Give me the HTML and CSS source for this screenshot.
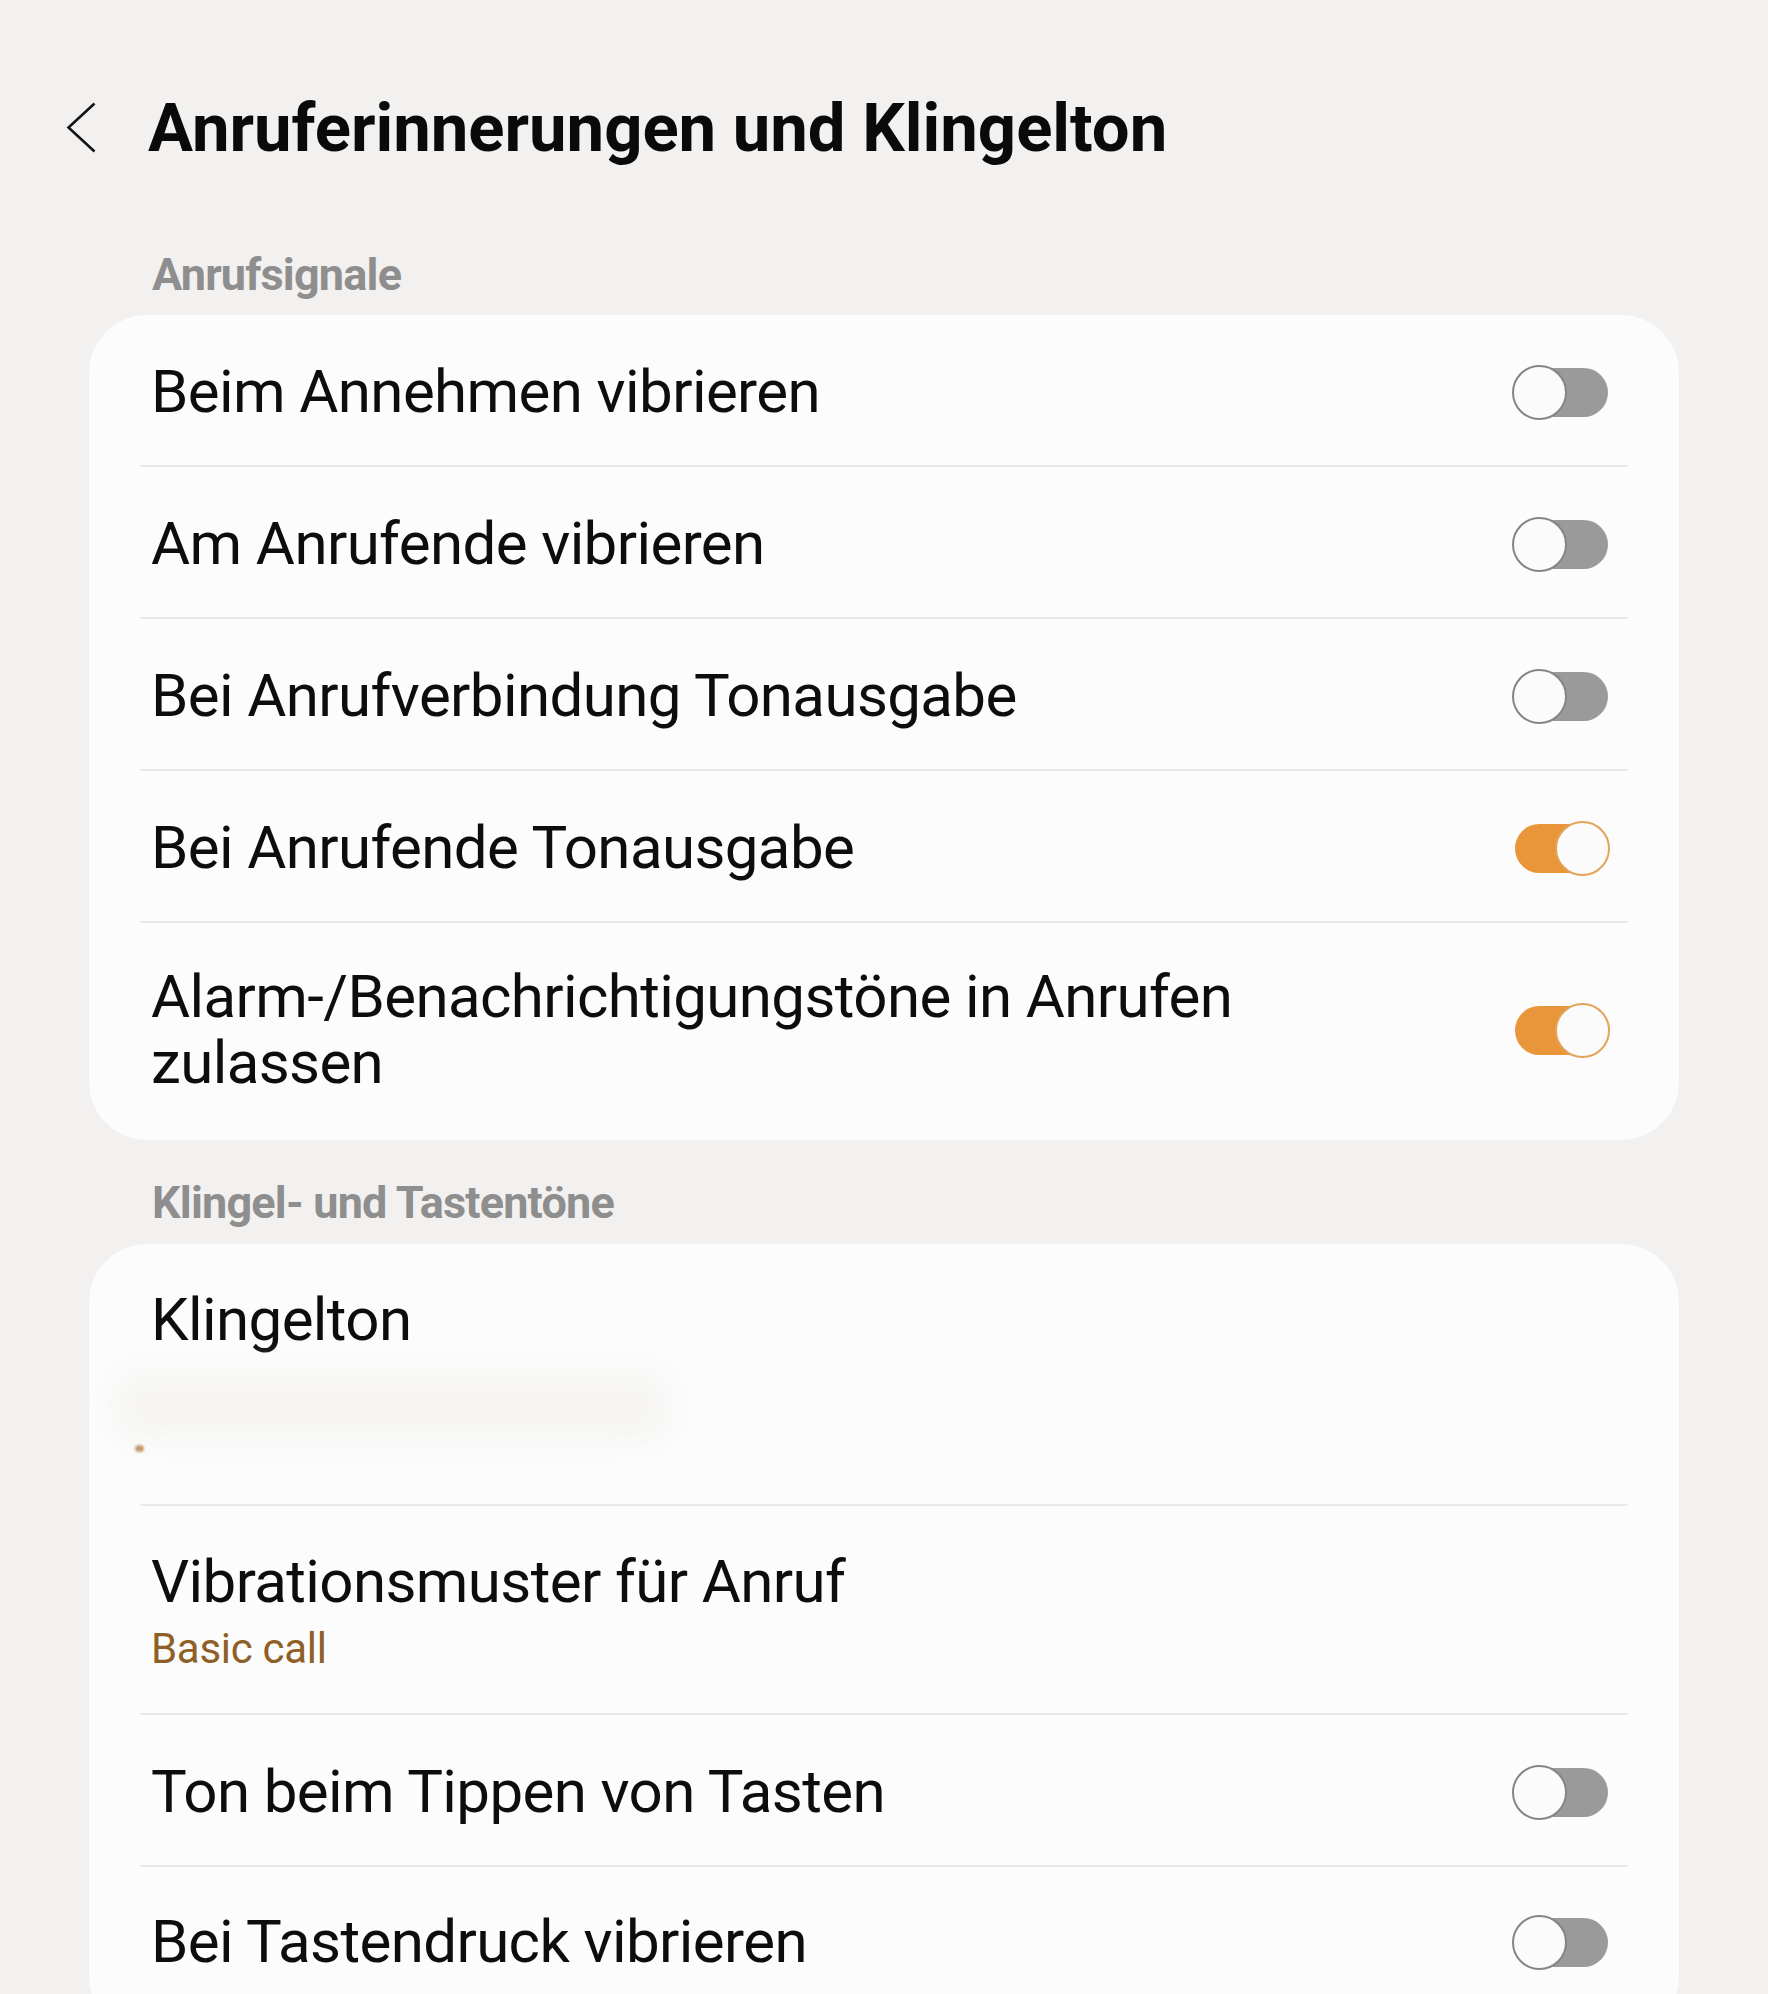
FILE: index.html
```html
<!DOCTYPE html>
<html lang="de">
<head>
<meta charset="utf-8">
<title>Anruferinnerungen und Klingelton</title>
<link rel="stylesheet" href="styles.css">
</head>
<body>
<div class="screen">
  <header class="header">
    <svg class="back" viewBox="0 0 31 52" width="31" height="52" aria-hidden="true">
      <polyline points="28.5,1.5 2.5,25.5 28.5,49.5" fill="none" stroke="#141414" stroke-width="2.6" stroke-linejoin="miter" stroke-linecap="butt"/>
    </svg>
    <h1 class="title">Anruferinnerungen und Klingelton</h1>
  </header>

  <div class="section-title first">Anrufsignale</div>
  <div class="card card-top">
    <div class="row">
      <div class="label">Beim Annehmen vibrieren</div>
      <span class="toggle"></span>
    </div>
    <div class="row">
      <div class="label">Am Anrufende vibrieren</div>
      <span class="toggle"></span>
    </div>
    <div class="row">
      <div class="label">Bei Anrufverbindung Tonausgabe</div>
      <span class="toggle"></span>
    </div>
    <div class="row">
      <div class="label">Bei Anrufende Tonausgabe</div>
      <span class="toggle on"></span>
    </div>
    <div class="row last">
      <div class="label">Alarm-/Benachrichtigungstöne in Anrufen<br>zulassen</div>
      <span class="toggle on"></span>
    </div>
  </div>

  <div class="section-title second">Klingel- und Tastentöne</div>
  <div class="card card-bottom">
    <div class="row stacked ringtone">
      <div class="label">Klingelton</div>
      <div class="ring-sub"><span class="smudge"></span><span class="dot"></span></div>
    </div>
    <div class="row stacked vib">
      <div class="label">Vibrationsmuster für Anruf</div>
      <div class="sub">Basic call</div>
    </div>
    <div class="row">
      <div class="label">Ton beim Tippen von Tasten</div>
      <span class="toggle"></span>
    </div>
    <div class="row last">
      <div class="label">Bei Tastendruck vibrieren</div>
      <span class="toggle"></span>
    </div>
  </div>
</div>
</body>
</html>
```

FILE: styles.css
```css
html, body {
  margin: 0;
  padding: 0;
}
body {
  background: #f2f1ef;
  font-family: Roboto, "Noto Sans", "Liberation Sans", sans-serif;
  color: #0d0d0d;
  width: 1768px;
  height: 1994px;
  overflow: hidden;
}
.screen {
  width: 1768px;
}
.header {
  display: flex;
  align-items: center;
  padding-top: 88px;
  padding-left: 66px;
}
.back {
  display: block;
  flex: none;
}
.title {
  margin: 0 0 0 51px;
  font-size: 67px;
  line-height: 80px;
  font-weight: 700;
  letter-spacing: 0;
  color: #0a0a0a;
}
.section-title {
  margin-left: 152px;
  font-size: 45px;
  line-height: 50px;
  font-weight: 700;
  color: #8e8e8e;
  letter-spacing: -0.8px;
}
.section-title.first {
  margin-top: 82px;
  margin-bottom: 15px;
}
.section-title.second {
  margin-top: 38px;
  margin-bottom: 16px;
}
.card {
  margin-left: 89px;
  width: 1590px;
  box-sizing: border-box;
  background: #fcfcfc;
  border-radius: 58px;
  padding: 0 51px 0 51px;
}
.card-bottom {
  padding-bottom: 20px;
}
.row {
  display: flex;
  align-items: center;
  padding: 44px 18px 40px 11px;
  border-bottom: 2px solid #e9e9e8;
}
.row.last {
  border-bottom: none;
}
.card-top .row.last {
  padding-top: 41px;
  padding-bottom: 44px;
}
.card-bottom .row.last {
  padding-top: 42px;
}
.label {
  flex: 1;
  font-size: 60px;
  line-height: 66px;
  font-weight: 400;
  letter-spacing: -0.6px;
}
.row.stacked {
  display: block;
}
.ringtone {
  padding-top: 43px;
  padding-bottom: 0;
  height: 262px;
  box-sizing: border-box;
}
.ring-sub {
  position: relative;
  height: 120px;
}
.smudge {
  display: block;
  position: absolute;
  left: -40px;
  top: 18px;
  width: 560px;
  height: 70px;
  background: #f6f5f3;
  border-radius: 30px;
  filter: blur(14px);
}
.dot {
  display: block;
  position: absolute;
  left: -16px;
  top: 92px;
  width: 9px;
  height: 7px;
  border-radius: 50%;
  background: #c79a70;
  filter: blur(1px);
}
.vib {
  padding-top: 43px;
  padding-bottom: 39px;
}
.sub {
  margin-top: 9px;
  font-size: 42px;
  line-height: 50px;
  color: #8e5f26;
  letter-spacing: -0.3px;
}
.toggle {
  position: relative;
  flex: none;
  width: 98px;
  height: 55px;
}
.toggle::before {
  content: "";
  position: absolute;
  left: 3px;
  right: 2px;
  top: 3px;
  height: 49px;
  border-radius: 25px;
  background: #9a9a9a;
}
.toggle::after {
  content: "";
  position: absolute;
  left: 0;
  top: 0;
  width: 55px;
  height: 55px;
  box-sizing: border-box;
  border-radius: 50%;
  background: #fbfbfb;
  border: 2.5px solid #858585;
}
.toggle.on::before {
  background: #e9963a;
}
.toggle.on::after {
  left: auto;
  right: 0;
  border-color: #e3a45a;
}
```
